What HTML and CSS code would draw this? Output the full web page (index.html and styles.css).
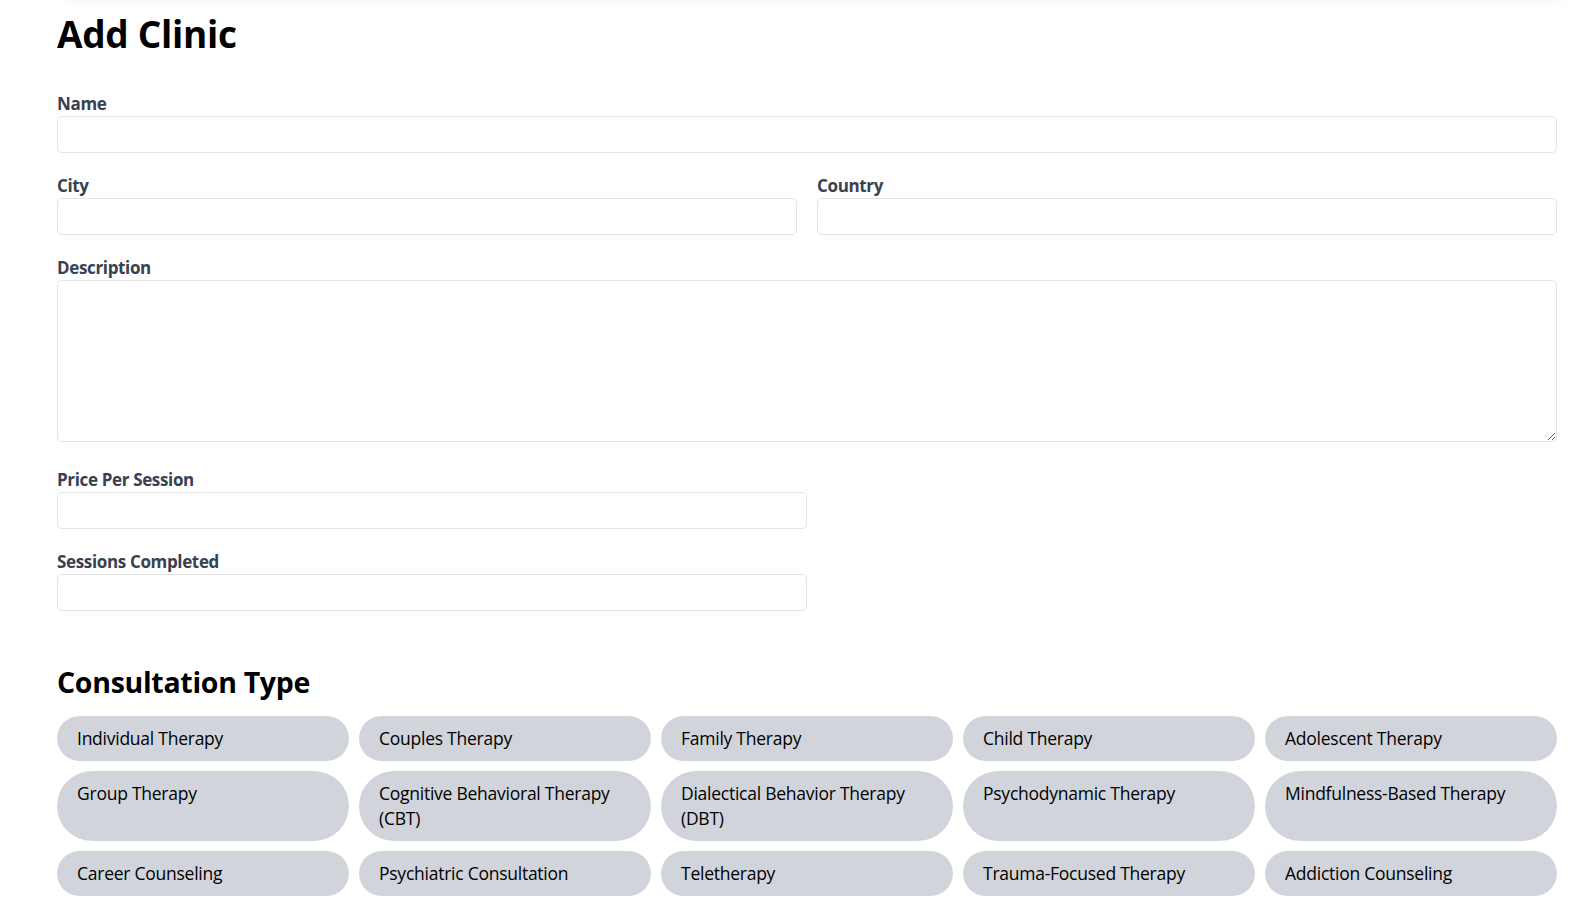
FILE: index.html
```html
<!DOCTYPE html>
<html lang="en">
<head>
<meta charset="utf-8">
<title>Add Clinic</title>
<link rel="stylesheet" href="styles.css">
</head>
<body>
<div class="top-shadow"></div>
<main class="page">
  <h1 class="title">Add Clinic</h1>
  <form class="form">
    <div class="field">
      <label class="label" for="name">Name</label>
      <input class="input" id="name" type="text">
    </div>
    <div class="row">
      <div class="field">
        <label class="label" for="city">City</label>
        <input class="input" id="city" type="text">
      </div>
      <div class="field">
        <label class="label" for="country">Country</label>
        <input class="input" id="country" type="text">
      </div>
    </div>
    <div class="field field-area">
      <label class="label" for="desc">Description</label>
      <textarea class="textarea" id="desc"></textarea>
    </div>
    <div class="field half">
      <label class="label" for="price">Price Per Session</label>
      <input class="input" id="price" type="text">
    </div>
    <div class="field half">
      <label class="label" for="sessions">Sessions Completed</label>
      <input class="input" id="sessions" type="text">
    </div>

    <h2 class="section-title">Consultation Type</h2>
    <div class="chips">
      <button type="button" class="chip">Individual Therapy</button>
      <button type="button" class="chip">Couples Therapy</button>
      <button type="button" class="chip">Family Therapy</button>
      <button type="button" class="chip">Child Therapy</button>
      <button type="button" class="chip">Adolescent Therapy</button>
      <button type="button" class="chip">Group Therapy</button>
      <button type="button" class="chip">Cognitive Behavioral Therapy (CBT)</button>
      <button type="button" class="chip">Dialectical Behavior Therapy (DBT)</button>
      <button type="button" class="chip">Psychodynamic Therapy</button>
      <button type="button" class="chip">Mindfulness-Based Therapy</button>
      <button type="button" class="chip">Career Counseling</button>
      <button type="button" class="chip">Psychiatric Consultation</button>
      <button type="button" class="chip">Teletherapy</button>
      <button type="button" class="chip">Trauma-Focused Therapy</button>
      <button type="button" class="chip">Addiction Counseling</button>
    </div>
  </form>
</main>
</body>
</html>
```

FILE: styles.css
```css
* { box-sizing: border-box; }

html, body {
  margin: 0;
  padding: 0;
  background: #ffffff;
  overflow: hidden;
}

body {
  font-family: "Open Sans", "Noto Sans", sans-serif;
  color: #111827;
  position: relative;
}

.top-shadow {
  position: absolute;
  top: -20px;
  left: 63px;
  right: 33px;
  height: 20px;
  border-radius: 12px;
  box-shadow: 0 2px 14px rgba(0, 0, 0, 0.04);
}

.page {
  padding: 10px 39px 0 57px;
}

.title {
  margin: 0;
  font-size: 37px;
  line-height: 48px;
  font-weight: 700;
  color: #000;
  letter-spacing: -0.3px;
}

.form {
  margin-top: 34px;
  display: flex;
  flex-direction: column;
}

.row {
  display: grid;
  grid-template-columns: 1fr 1fr;
  column-gap: 20px;
}

.field {
  display: flex;
  flex-direction: column;
  margin-bottom: 21px;
}

.half {
  width: 750px;
}

.label {
  font-size: 17px;
  line-height: 24px;
  font-weight: 700;
  color: #374151;
  letter-spacing: -0.35px;
}

.input {
  height: 37px;
  border: 1px solid #e3e4e6;
  border-radius: 5px;
  background: #fff;
  font: inherit;
  padding: 0 10px;
  outline: none;
}

.textarea {
  height: 162px;
  border: 1px solid #e3e4e6;
  border-radius: 5px;
  background: #fff;
  font: inherit;
  padding: 8px 10px;
  resize: vertical;
  outline: none;
}

.field-area {
  margin-bottom: 26px;
}

.section-title {
  margin: 30px 0 0;
  font-size: 28.5px;
  line-height: 40px;
  font-weight: 700;
  color: #000;
  letter-spacing: -0.3px;
}

.chips {
  margin-top: 14px;
  display: grid;
  grid-template-columns: repeat(5, 1fr);
  gap: 10px;
}

.chip {
  border: none;
  background: #d1d5db;
  border-radius: 9999px;
  padding: 10px 20px;
  font-family: inherit;
  font-size: 17.5px;
  line-height: 25px;
  font-weight: 500;
  color: #000;
  text-align: left;
  display: flex;
  align-items: flex-start;
  letter-spacing: -0.25px;
}
```
